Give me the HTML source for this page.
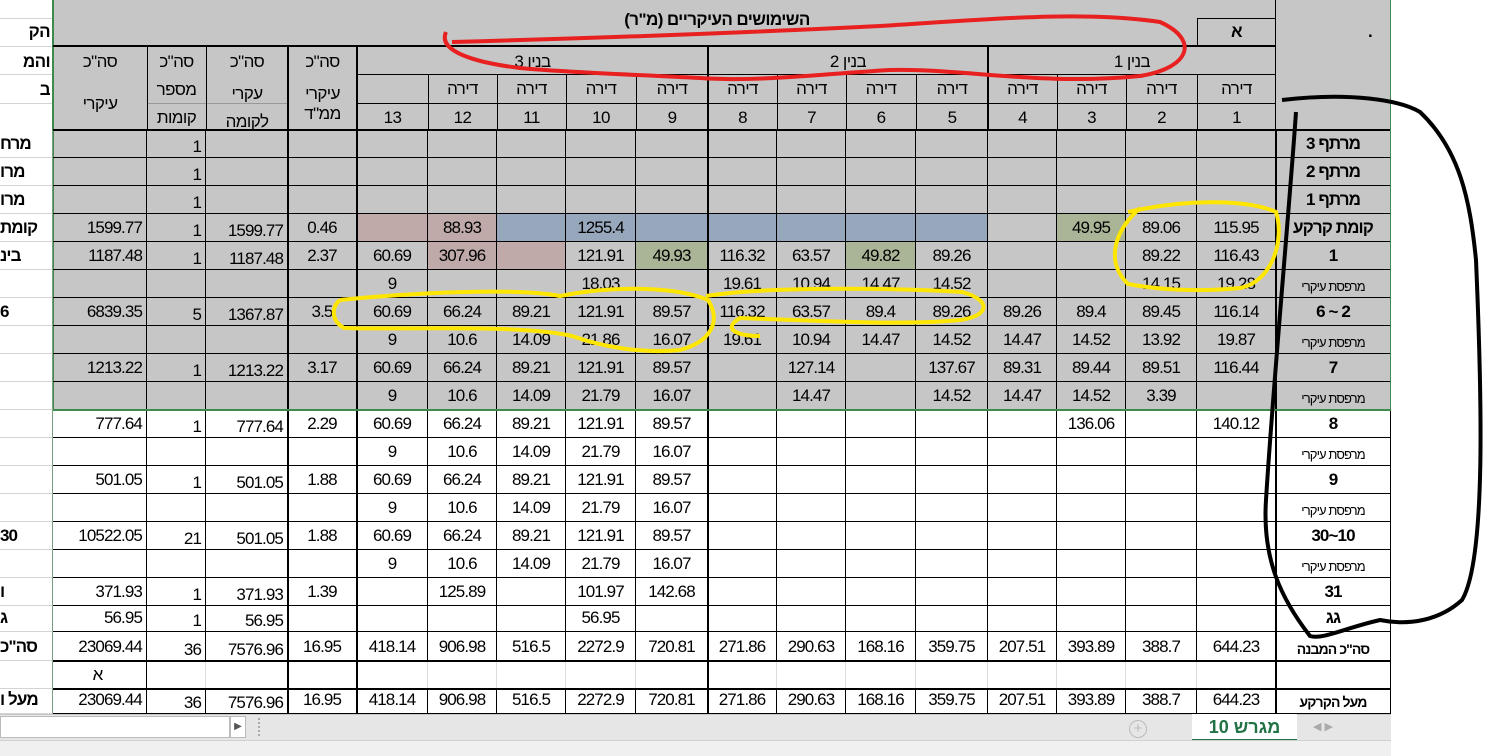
<!DOCTYPE html>
<html><head><meta charset="utf-8"><style>
*{margin:0;padding:0;box-sizing:border-box}
body{width:1487px;height:756px;overflow:hidden;background:#fff;position:relative;font-family:"Liberation Sans",Arial,sans-serif;color:#000}
.bg{position:absolute;left:53px;top:0;width:1338px;height:410px;background:#c6c6c6}
.r{position:absolute;left:0;display:grid;grid-template-columns:53px 94px 59px 82px 69px 71px 69px 69px 70px 72px 69px 69px 70px 72px 69px 69px 71px 79px 115px;font-size:17px;letter-spacing:-0.9px}
.r i{font-style:normal;border-right:1px solid #000;border-bottom:1px solid #000;text-align:center;white-space:nowrap;overflow:hidden;display:flex;align-items:flex-end;justify-content:center;padding-bottom:3px}
.r i:first-child{border-right:1px solid #7aa07a;border-bottom:1px solid #d4d4d4;justify-content:flex-end;font-weight:bold;direction:rtl}
.r i:nth-child(2),.r i:nth-child(3),.r i:nth-child(4){justify-content:flex-end;padding-right:4px}
.r i:nth-child(3),.r i:nth-child(4){padding-bottom:0}
.r i:last-child{font-weight:bold;direction:rtl}
.r i.s{font-weight:normal;font-size:13px}
.p{background:#bfaaa9}.b{background:#97a8bc}.g{background:#a9b596}
.h{position:absolute;font-size:17px;text-align:center;letter-spacing:-0.6px}
.ln{position:absolute;background:#000}
</style></head><body>
<div class="bg"></div>
<div class="h" style="left:0;top:22px;width:50px;text-align:right;font-weight:bold;overflow:hidden">הק</div>
<div class="h" style="left:0;top:52px;width:50px;text-align:right;font-weight:bold;overflow:hidden">והמ</div>
<div class="h" style="left:0;top:80px;width:50px;text-align:right;font-weight:bold;overflow:hidden">ב</div>
<div class="ln" style="left:0;top:18px;width:53px;height:1px;background:#d4d4d4"></div>
<div class="ln" style="left:0;top:46px;width:53px;height:1px;background:#d4d4d4"></div>
<div class="ln" style="left:0;top:74px;width:53px;height:1px;background:#d4d4d4"></div>
<div class="ln" style="left:0;top:103px;width:53px;height:1px;background:#d4d4d4"></div>
<div class="ln" style="left:52px;top:0;width:2px;height:410px;background:#3d8a4f"></div>
<div class="h" style="left:357px;top:10px;width:720px;font-weight:bold">השימושים העיקריים (מ"ר)</div>
<div class="ln" style="left:1197px;top:18px;width:79px;height:1px"></div>
<div class="ln" style="left:1197px;top:18px;width:1px;height:28px"></div>
<div class="h" style="left:1197px;top:22px;width:79px;font-weight:bold">א</div>
<div class="h" style="left:1360px;top:22px;width:20px;font-weight:bold">.</div>
<div class="ln" style="left:53px;top:45px;width:1223px;height:2px"></div>
<div class="ln" style="left:1275px;top:0;width:1px;height:632px"></div>
<div class="h" style="left:53px;top:52px;width:94px">סה"כ</div>
<div class="h" style="left:147px;top:52px;width:59px">סה"כ</div>
<div class="h" style="left:206px;top:52px;width:82px">סה"כ</div>
<div class="h" style="left:288px;top:52px;width:69px">סה"כ</div>
<div class="h" style="left:357px;top:52px;width:351px">בנין 3</div>
<div class="h" style="left:708px;top:52px;width:280px">בנין 2</div>
<div class="h" style="left:988px;top:52px;width:288px">בנין 1</div>
<div class="h" style="left:53px;top:94px;width:94px">עיקרי</div>
<div class="h" style="left:147px;top:80px;width:59px">מספר</div>
<div class="h" style="left:147px;top:108px;width:59px">קומות</div>
<div class="h" style="left:206px;top:84px;width:82px">עקרי</div>
<div class="h" style="left:206px;top:112px;width:82px">לקומה</div>
<div class="h" style="left:288px;top:84px;width:69px">עיקרי</div>
<div class="h" style="left:288px;top:104px;width:69px">ממ"ד</div>
<div class="ln" style="left:357px;top:74px;width:919px;height:1px"></div>
<div class="ln" style="left:357px;top:103px;width:919px;height:1px"></div>
<div class="ln" style="left:147px;top:103px;width:141px;height:1px;background:#999"></div>
<div style="position:absolute;left:357px;top:74px;display:grid;grid-template-columns:71px 69px 69px 70px 72px 69px 69px 70px 72px 69px 69px 71px 79px;font-size:17px;letter-spacing:-0.6px">
<span style="height:29px"></span><span style="text-align:center;padding-top:5px">דירה</span><span style="text-align:center;padding-top:5px">דירה</span><span style="text-align:center;padding-top:5px">דירה</span><span style="text-align:center;padding-top:5px">דירה</span><span style="text-align:center;padding-top:5px">דירה</span><span style="text-align:center;padding-top:5px">דירה</span><span style="text-align:center;padding-top:5px">דירה</span><span style="text-align:center;padding-top:5px">דירה</span><span style="text-align:center;padding-top:5px">דירה</span><span style="text-align:center;padding-top:5px">דירה</span><span style="text-align:center;padding-top:5px">דירה</span><span style="text-align:center;padding-top:5px">דירה</span>
<span style="text-align:center;padding-top:5px">13</span><span style="text-align:center;padding-top:5px">12</span><span style="text-align:center;padding-top:5px">11</span><span style="text-align:center;padding-top:5px">10</span><span style="text-align:center;padding-top:5px">9</span><span style="text-align:center;padding-top:5px">8</span><span style="text-align:center;padding-top:5px">7</span><span style="text-align:center;padding-top:5px">6</span><span style="text-align:center;padding-top:5px">5</span><span style="text-align:center;padding-top:5px">4</span><span style="text-align:center;padding-top:5px">3</span><span style="text-align:center;padding-top:5px">2</span><span style="text-align:center;padding-top:5px">1</span>
</div>
<div class="ln" style="left:147px;top:46px;width:1px;height:84px"></div>
<div class="ln" style="left:206px;top:46px;width:1px;height:84px"></div>
<div class="ln" style="left:287px;top:46px;width:2px;height:84px"></div>
<div class="ln" style="left:356px;top:46px;width:2px;height:84px"></div>
<div class="ln" style="left:707px;top:46px;width:2px;height:84px"></div>
<div class="ln" style="left:987px;top:46px;width:2px;height:84px"></div>
<div class="ln" style="left:428px;top:74px;width:1px;height:56px"></div>
<div class="ln" style="left:497px;top:74px;width:1px;height:56px"></div>
<div class="ln" style="left:566px;top:74px;width:1px;height:56px"></div>
<div class="ln" style="left:636px;top:74px;width:1px;height:56px"></div>
<div class="ln" style="left:777px;top:74px;width:1px;height:56px"></div>
<div class="ln" style="left:846px;top:74px;width:1px;height:56px"></div>
<div class="ln" style="left:916px;top:74px;width:1px;height:56px"></div>
<div class="ln" style="left:1057px;top:74px;width:1px;height:56px"></div>
<div class="ln" style="left:1126px;top:74px;width:1px;height:56px"></div>
<div class="ln" style="left:1197px;top:74px;width:1px;height:56px"></div>
<div class="ln" style="left:53px;top:129px;width:1338px;height:2px"></div>

<div class="r" style="top:130px;grid-auto-rows:28px"><i>מרח</i><i></i><i>1</i><i></i><i></i><i></i><i></i><i></i><i></i><i></i><i></i><i></i><i></i><i></i><i></i><i></i><i></i><i></i><i>מרתף 3</i></div>
<div class="r" style="top:158px;grid-auto-rows:28px"><i>מרו</i><i></i><i>1</i><i></i><i></i><i></i><i></i><i></i><i></i><i></i><i></i><i></i><i></i><i></i><i></i><i></i><i></i><i></i><i>מרתף 2</i></div>
<div class="r" style="top:186px;grid-auto-rows:28px"><i>מרו</i><i></i><i>1</i><i></i><i></i><i></i><i></i><i></i><i></i><i></i><i></i><i></i><i></i><i></i><i></i><i></i><i></i><i></i><i>מרתף 1</i></div>
<div class="r" style="top:214px;grid-auto-rows:28px"><i>קומת</i><i>1599.77</i><i>1</i><i>1599.77</i><i>0.46</i><i class="p"></i><i class="p">88.93</i><i class="b"></i><i class="b">1255.4</i><i class="b"></i><i class="b"></i><i class="b"></i><i class="b"></i><i class="b"></i><i></i><i class="g">49.95</i><i>89.06</i><i>115.95</i><i>קומת קרקע</i></div>
<div class="r" style="top:242px;grid-auto-rows:28px"><i>בינ</i><i>1187.48</i><i>1</i><i>1187.48</i><i>2.37</i><i>60.69</i><i class="p">307.96</i><i class="p"></i><i>121.91</i><i class="g">49.93</i><i>116.32</i><i>63.57</i><i class="g">49.82</i><i>89.26</i><i></i><i></i><i>89.22</i><i>116.43</i><i>1</i></div>
<div class="r" style="top:270px;grid-auto-rows:28px"><i></i><i></i><i></i><i></i><i></i><i>9</i><i></i><i></i><i>18.03</i><i></i><i>19.61</i><i>10.94</i><i>14.47</i><i>14.52</i><i></i><i></i><i>14.15</i><i>19.28</i><i class="s">מרפסת עיקרי</i></div>
<div class="r" style="top:298px;grid-auto-rows:28px"><i>6</i><i>6839.35</i><i>5</i><i>1367.87</i><i>3.5</i><i>60.69</i><i>66.24</i><i>89.21</i><i>121.91</i><i>89.57</i><i>116.32</i><i>63.57</i><i>89.4</i><i>89.26</i><i>89.26</i><i>89.4</i><i>89.45</i><i>116.14</i><i>2 ~ 6</i></div>
<div class="r" style="top:326px;grid-auto-rows:28px"><i></i><i></i><i></i><i></i><i></i><i>9</i><i>10.6</i><i>14.09</i><i>21.86</i><i>16.07</i><i>19.61</i><i>10.94</i><i>14.47</i><i>14.52</i><i>14.47</i><i>14.52</i><i>13.92</i><i>19.87</i><i class="s">מרפסת עיקרי</i></div>
<div class="r" style="top:354px;grid-auto-rows:28px"><i></i><i>1213.22</i><i>1</i><i>1213.22</i><i>3.17</i><i>60.69</i><i>66.24</i><i>89.21</i><i>121.91</i><i>89.57</i><i></i><i>127.14</i><i></i><i>137.67</i><i>89.31</i><i>89.44</i><i>89.51</i><i>116.44</i><i>7</i></div>
<div class="r" style="top:382px;grid-auto-rows:28px"><i></i><i></i><i></i><i></i><i></i><i>9</i><i>10.6</i><i>14.09</i><i>21.79</i><i>16.07</i><i></i><i>14.47</i><i></i><i>14.52</i><i>14.47</i><i>14.52</i><i>3.39</i><i></i><i class="s">מרפסת עיקרי</i></div>
<div class="r" style="top:410px;grid-auto-rows:28px"><i></i><i>777.64</i><i>1</i><i>777.64</i><i>2.29</i><i>60.69</i><i>66.24</i><i>89.21</i><i>121.91</i><i>89.57</i><i></i><i></i><i></i><i></i><i></i><i>136.06</i><i></i><i>140.12</i><i>8</i></div>
<div class="r" style="top:438px;grid-auto-rows:28px"><i></i><i></i><i></i><i></i><i></i><i>9</i><i>10.6</i><i>14.09</i><i>21.79</i><i>16.07</i><i></i><i></i><i></i><i></i><i></i><i></i><i></i><i></i><i class="s">מרפסת עיקרי</i></div>
<div class="r" style="top:466px;grid-auto-rows:28px"><i></i><i>501.05</i><i>1</i><i>501.05</i><i>1.88</i><i>60.69</i><i>66.24</i><i>89.21</i><i>121.91</i><i>89.57</i><i></i><i></i><i></i><i></i><i></i><i></i><i></i><i></i><i>9</i></div>
<div class="r" style="top:494px;grid-auto-rows:28px"><i></i><i></i><i></i><i></i><i></i><i>9</i><i>10.6</i><i>14.09</i><i>21.79</i><i>16.07</i><i></i><i></i><i></i><i></i><i></i><i></i><i></i><i></i><i class="s">מרפסת עיקרי</i></div>
<div class="r" style="top:522px;grid-auto-rows:28px"><i>30</i><i>10522.05</i><i>21</i><i>501.05</i><i>1.88</i><i>60.69</i><i>66.24</i><i>89.21</i><i>121.91</i><i>89.57</i><i></i><i></i><i></i><i></i><i></i><i></i><i></i><i></i><i>10~30</i></div>
<div class="r" style="top:550px;grid-auto-rows:28px"><i></i><i></i><i></i><i></i><i></i><i>9</i><i>10.6</i><i>14.09</i><i>21.79</i><i>16.07</i><i></i><i></i><i></i><i></i><i></i><i></i><i></i><i></i><i class="s">מרפסת עיקרי</i></div>
<div class="r" style="top:578px;grid-auto-rows:28px"><i>ו</i><i>371.93</i><i>1</i><i>371.93</i><i>1.39</i><i></i><i>125.89</i><i></i><i>101.97</i><i>142.68</i><i></i><i></i><i></i><i></i><i></i><i></i><i></i><i></i><i>31</i></div>
<div class="r" style="top:606px;grid-auto-rows:26px"><i>ג</i><i>56.95</i><i>1</i><i>56.95</i><i></i><i></i><i></i><i></i><i>56.95</i><i></i><i></i><i></i><i></i><i></i><i></i><i></i><i></i><i></i><i>גג</i></div>
<div class="r" style="top:632px;grid-auto-rows:29px"><i>סה"כ</i><i>23069.44</i><i>36</i><i>7576.96</i><i>16.95</i><i>418.14</i><i>906.98</i><i>516.5</i><i>2272.9</i><i>720.81</i><i>271.86</i><i>290.63</i><i>168.16</i><i>359.75</i><i>207.51</i><i>393.89</i><i>388.7</i><i>644.23</i><i class="s" style="font-weight:bold;font-size:14px">סה"כ המבנה</i></div>
<div class="r" style="top:661px;grid-auto-rows:28px"><i></i><i style="justify-content:center">א</i><i style="border-color:#ddd"></i><i style="border-color:#ddd"></i><i style="border-color:#ddd"></i><i style="border-color:#ddd"></i><i style="border-color:#ddd"></i><i style="border-color:#ddd"></i><i style="border-color:#ddd"></i><i style="border-color:#ddd"></i><i style="border-color:#ddd"></i><i style="border-color:#ddd"></i><i style="border-color:#ddd"></i><i style="border-color:#ddd"></i><i style="border-color:#ddd"></i><i style="border-color:#ddd"></i><i style="border-color:#ddd"></i><i style="border-color:#000"></i><i></i></div>
<div class="r" style="top:689px;grid-auto-rows:25px"><i>מעל ו</i><i>23069.44</i><i>36</i><i>7576.96</i><i>16.95</i><i>418.14</i><i>906.98</i><i>516.5</i><i>2272.9</i><i>720.81</i><i>271.86</i><i>290.63</i><i>168.16</i><i>359.75</i><i>207.51</i><i>393.89</i><i>388.7</i><i>644.23</i><i class="s" style="font-weight:bold;font-size:14px">מעל הקרקע</i></div>
<div class="ln" style="left:287px;top:130px;width:2px;height:584px"></div>
<div class="ln" style="left:356px;top:130px;width:2px;height:584px"></div>
<div class="ln" style="left:707px;top:130px;width:2px;height:584px"></div>
<div class="ln" style="left:1275px;top:130px;width:2px;height:584px"></div>
<div class="ln" style="left:53px;top:660px;width:1338px;height:2px"></div>
<div class="ln" style="left:53px;top:688px;width:1338px;height:2px"></div>
<div class="ln" style="left:53px;top:409px;width:1338px;height:2px;background:#3d8a4f"></div>
<div class="ln" style="left:1390px;top:0;width:1px;height:410px;background:#3d8a4f"></div>
<div style="position:absolute;left:1391px;top:0;width:96px;height:714px;background:#fff"></div>
<div style="position:absolute;left:0;top:714px;width:1391px;height:26px;background:#e6e6e6;border-top:1px solid #c8c8c8"></div>
<div style="position:absolute;left:0;top:716px;width:230px;height:22px;background:#fff;border:1px solid #bbb"></div>
<div style="position:absolute;left:230px;top:716px;width:16px;height:22px;background:#fff;border:1px solid #bbb;font-size:10px;text-align:center;line-height:20px;color:#555">▶</div>
<div style="position:absolute;left:258px;top:718px;width:2px;height:18px;border-left:2px dotted #aaa"></div>
<div style="position:absolute;left:1129px;top:720px;width:18px;height:18px;border:1px solid #bbb;border-radius:50%;color:#bbb;font-size:15px;text-align:center;line-height:16px">+</div>
<div style="position:absolute;left:1192px;top:714px;width:105px;height:28px;background:#fff;border-bottom:3px solid #217346;color:#217346;font-weight:bold;font-size:18px;text-align:center;line-height:26px">מגרש 10</div>
<div style="position:absolute;left:1313px;top:720px;font-size:11px;color:#aaa">◀ ▶</div>
<div style="position:absolute;left:0;top:740px;width:1391px;height:16px;background:#f0f0f0;border-top:1px solid #d0d0d0"></div>
<svg style="position:absolute;left:0;top:0" width="1487" height="756" fill="none">
<path d="M452,42 C600,38 760,32 880,26 C980,20 1080,10 1160,22 C1200,40 1190,68 1140,76 C1040,86 960,68 890,70 C820,74 760,82 700,78 C620,74 560,72 520,68 C470,62 438,50 446,32" stroke="#e82020" stroke-width="4"/>
<path d="M1128,212 C1180,200 1245,198 1276,212 C1285,240 1272,282 1240,288 C1200,292 1160,290 1128,284 C1108,265 1110,235 1140,208" stroke="#ffe600" stroke-width="4"/>
<path d="M340,300 C420,292 520,288 560,296 C620,284 680,288 708,300 C722,322 710,342 680,350 C640,354 600,346 572,336 C520,324 400,330 344,328 C330,320 332,306 340,300" stroke="#ffe600" stroke-width="4"/>
<path d="M706,296 C770,286 900,288 962,292 C992,300 990,316 960,320 C900,326 800,320 740,318 C720,330 740,336 760,336" stroke="#ffe600" stroke-width="4"/>
<path d="M1282,100 C1350,92 1400,100 1420,112 C1460,150 1470,200 1476,260 C1482,400 1486,560 1462,600 C1440,620 1410,626 1380,620 C1345,628 1322,640 1310,636 C1282,600 1262,560 1266,500 C1272,400 1290,200 1296,112" stroke="#000" stroke-width="4"/>
</svg>
</body></html>
